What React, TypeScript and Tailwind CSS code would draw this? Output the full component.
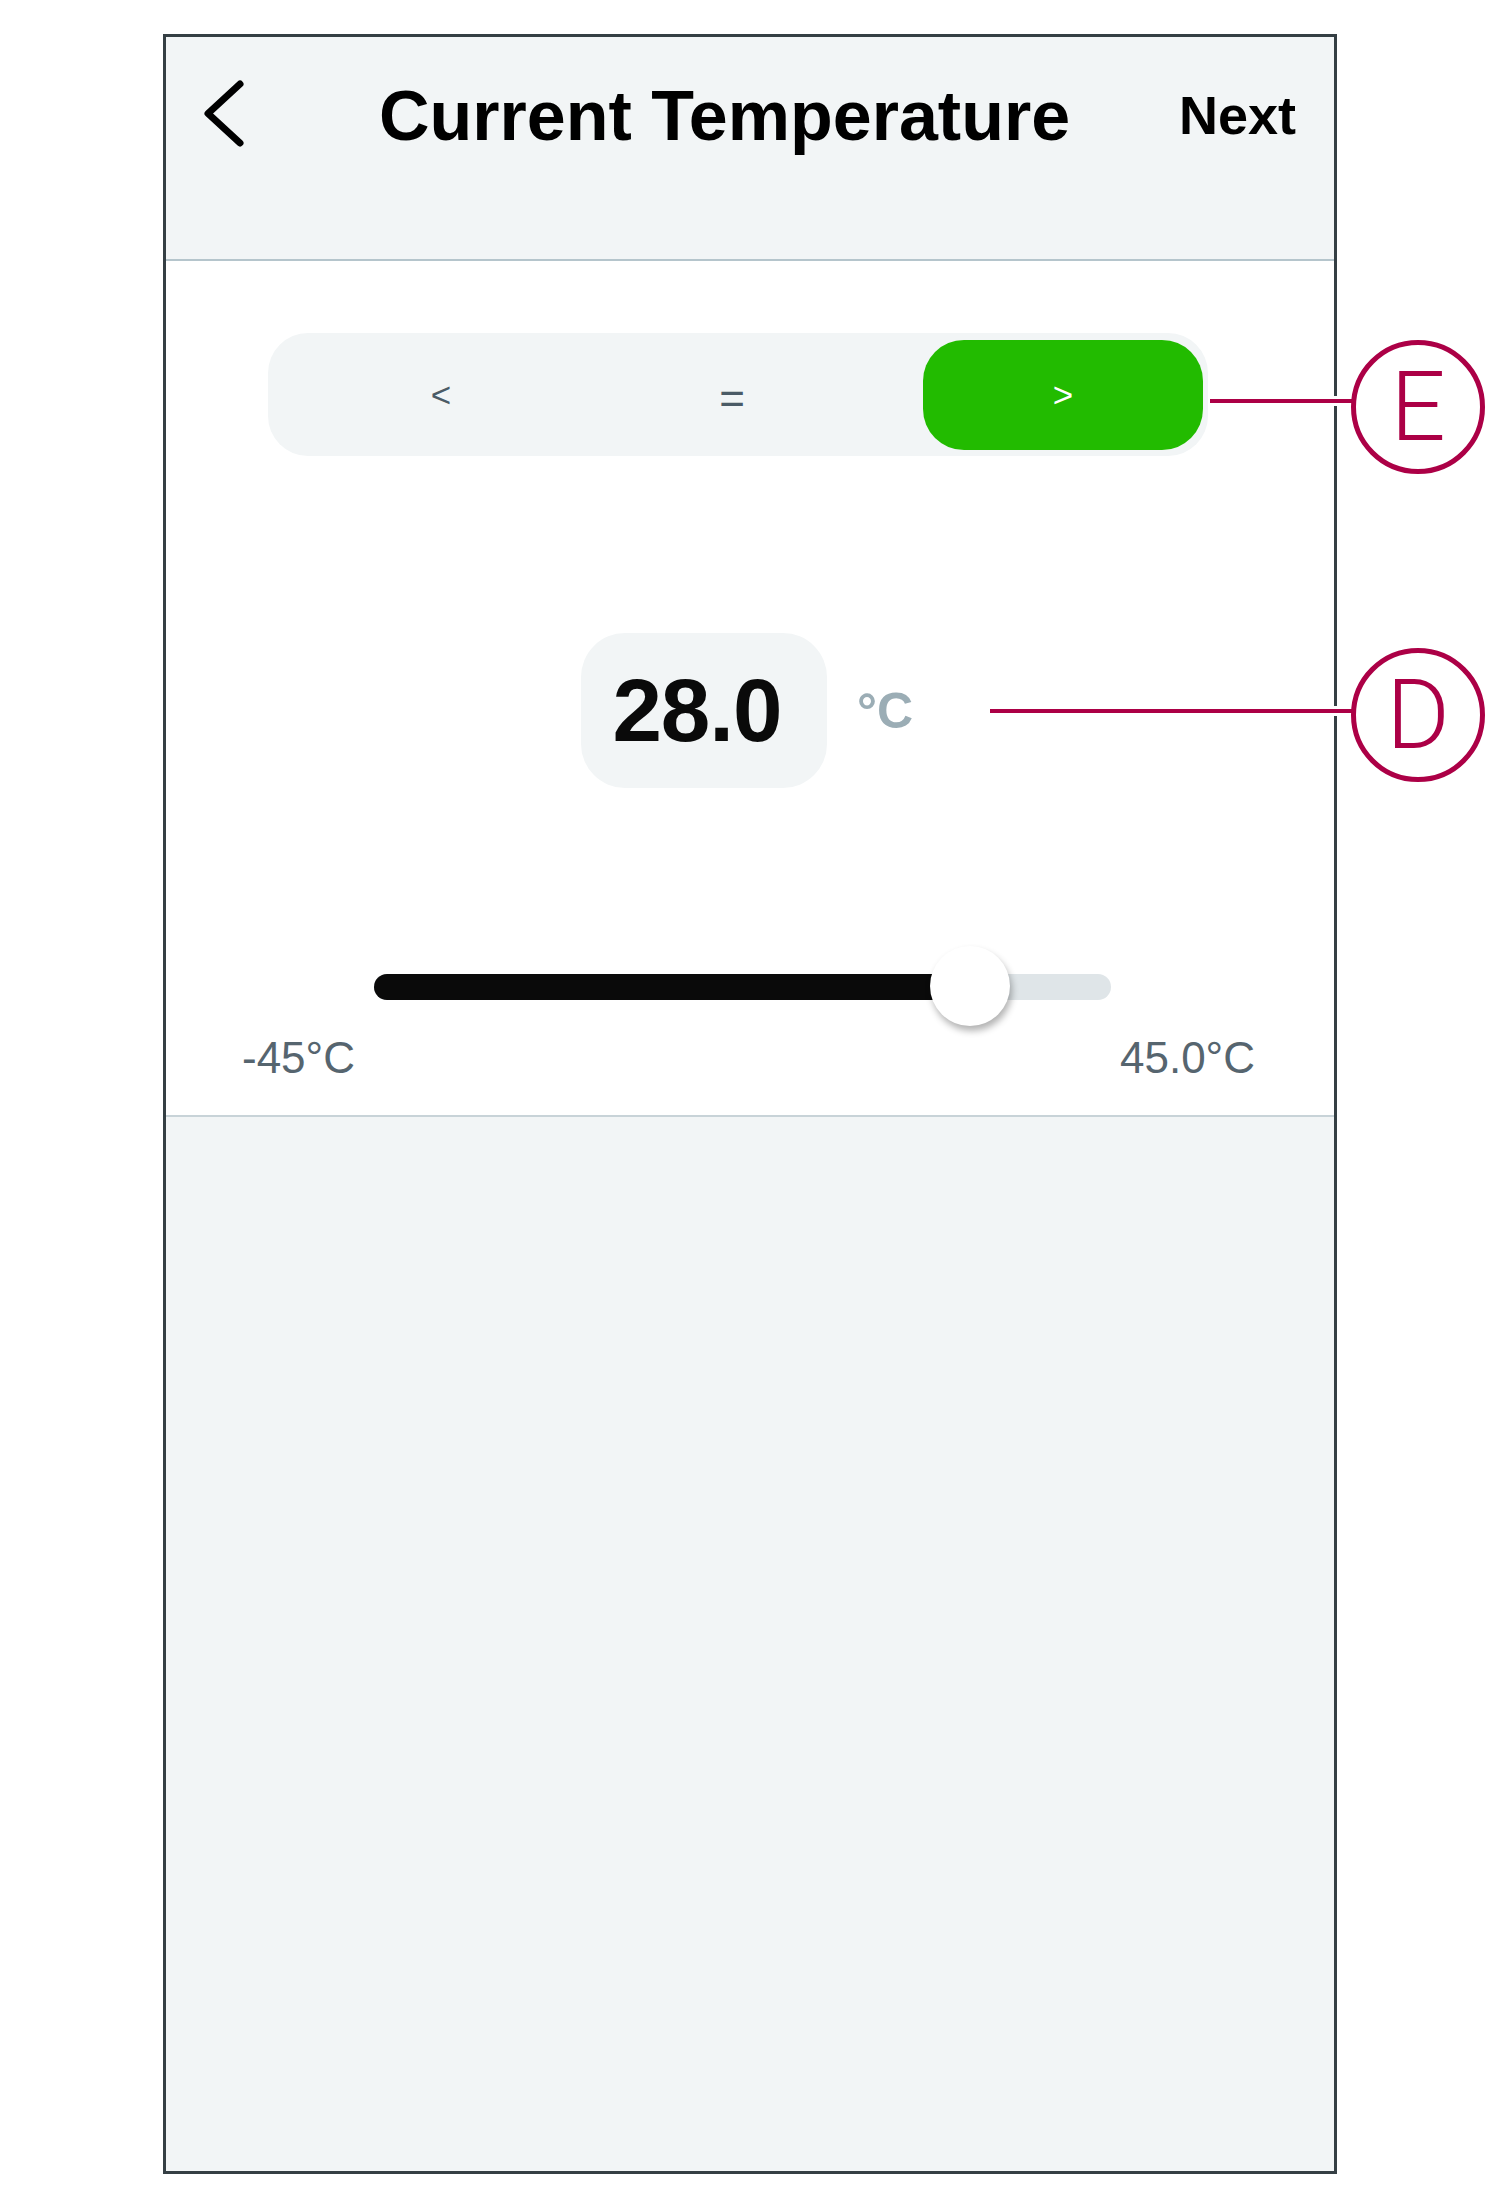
import React from 'react';

// Annotation callout: a letter in a ring, joined to the UI by a line
function Callout({ letter, className }: { letter: string; className: string }) {
  return (
    <div
      className={`absolute w-[134px] h-[134px] rounded-full border-[5px] border-[#ac0046] bg-white flex items-center justify-center ${className}`}
    >
      <span className="font-['Roboto',sans-serif] font-light text-[97px] leading-none text-[#ac0046]">
        {letter}
      </span>
    </div>
  );
}

export default function App() {
  return (
    <div className="relative w-[1500px] h-[2208px] bg-white pt-[34px] pl-[163px] font-['Liberation_Sans',Arial,sans-serif]">
      <div className="w-[1174px] h-[2140px] border-[3px] border-[#353f44] bg-[#f2f5f6] flex flex-col">
        {/* header */}
        <header className="h-[224px] shrink-0 border-b-2 border-[#b5c5cc] bg-[#f2f5f6] flex items-start">
          <svg className="ml-[37px] mt-[41px] shrink-0" width="48" height="72" viewBox="0 0 48 72" fill="none">
            <path d="M37 6 L5 35.5 L37 65" stroke="#000" strokeWidth="7" strokeLinecap="round" strokeLinejoin="round" />
          </svg>
          <h1 className="ml-[128px] mt-[44px] text-[70px] font-bold leading-none text-black whitespace-nowrap">
            Current Temperature
          </h1>
          <button className="ml-auto mr-[38px] mt-[51px] text-[54px] font-bold leading-none text-black">Next</button>
        </header>

        {/* settings */}
        <section className="h-[856px] shrink-0 border-b-2 border-[#c8d3d8] bg-white flex flex-col">
          <div className="mt-[72px] ml-[102px] w-[940px] h-[123px] rounded-[40px] bg-[#f2f5f6] flex items-center pl-[6px] pr-[5px]">
            <div className="w-[334px] text-center text-[35px] leading-none text-[#4b5b66]">&lt;</div>
            <div className="w-[248px] mt-[9px] text-center text-[44px] leading-none text-[#4b5b66]">=</div>
            <div className="ml-auto w-[280px] h-[110px] rounded-[41px] bg-[#22bb00] flex items-center justify-center text-[35px] leading-none text-white">
              &gt;
            </div>
          </div>

          <div className="mt-[177px] pl-[415px] flex items-center">
            <div className="w-[246px] h-[155px] rounded-[44px] bg-[#f2f5f6] flex items-center justify-center pr-[14px]">
              <span className="text-[89px] font-bold leading-none tracking-[-1px] text-[#0a0a0a]">28.0</span>
            </div>
            <span className="ml-[30px] text-[50px] font-bold leading-none text-[#9badb5]">°C</span>
          </div>

          <div className="relative mt-[158px] ml-[208px] w-[737px] h-[80px]">
            <div className="mt-[28px] h-[26px] rounded-full bg-[#dfe5e8]">
              <div className="w-[596px] h-full rounded-full bg-[#0a0a0a]" />
            </div>
            <div className="absolute left-[556px] top-0 w-[80px] h-[80px] rounded-full bg-white shadow-[2px_5px_7px_rgba(0,0,0,0.3)]" />
          </div>

          <div className="mt-[10px] pl-[76px] pr-[79px] flex justify-between text-[44px] leading-none text-[#56656f]">
            <span>-45°C</span>
            <span>45.0°C</span>
          </div>
        </section>

        <div className="flex-1 bg-[#f2f5f6]" />
      </div>

      {/* annotation lines and callouts */}
      <div className="absolute left-[1210px] top-[396px] w-[145px] h-[10px] border-y-[3px] border-white bg-[#ac0046]" />
      <Callout letter="E" className="left-[1351px] top-[340px]" />
      <div className="absolute left-[990px] top-[706px] w-[365px] h-[10px] border-y-[3px] border-white bg-[#ac0046]" />
      <Callout letter="D" className="left-[1351px] top-[648px]" />
    </div>
  );
}
